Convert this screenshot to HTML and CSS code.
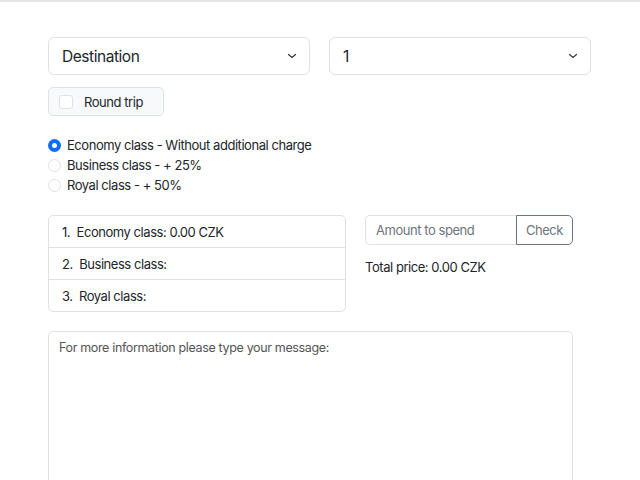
FILE: index.html
```html
<!DOCTYPE html>
<html>
<head>
<meta charset="utf-8">
<link rel="stylesheet" href="styles.css">
</head>
<body>
<div class="topline"></div>
<main class="page">
  <div class="selects">
    <div class="select"><span>Destination</span><svg width="10" height="6" viewBox="0 0 10 6"><path d="M1.5 1.5 L5 4.5 L8.5 1.5" fill="none" stroke="#343a40" stroke-width="1.2" stroke-linecap="round" stroke-linejoin="round"/></svg></div>
    <div class="select"><span>1</span><svg width="10" height="6" viewBox="0 0 10 6"><path d="M1.5 1.5 L5 4.5 L8.5 1.5" fill="none" stroke="#343a40" stroke-width="1.2" stroke-linecap="round" stroke-linejoin="round"/></svg></div>
  </div>
  <div class="roundtrip"><span class="check"></span><span>Round trip</span></div>
  <div class="radios">
    <div class="radio-row"><span class="radio on"></span>Economy class - Without additional charge</div>
    <div class="radio-row"><span class="radio"></span>Business class - + 25%</div>
    <div class="radio-row"><span class="radio"></span>Royal class - + 50%</div>
  </div>
  <div class="middle">
    <ol class="list">
      <li>1.&nbsp; Economy class: 0.00 CZK</li>
      <li>2.&nbsp; Business class:</li>
      <li>3.&nbsp; Royal class:</li>
    </ol>
    <div class="side">
      <div class="group"><div class="amount">Amount to spend</div><div class="btn">Check</div></div>
      <div class="total">Total price: 0.00 CZK</div>
    </div>
  </div>
  <div class="textarea">For more information please type your message:</div>
</main>
</body>
</html>
```
FILE: styles.css
```css
html, body { margin: 0; padding: 0; background: #fff; }
body { font-family: Inter, "Noto Sans", sans-serif; color: #212529; overflow: hidden; height: 480px; letter-spacing: -0.45px; }
.topline { height: 2px; background: #e6e6e6; }
.page { padding: 35px 0 0 48px; }
.selects { display: flex; gap: 19px; }
.select { width: 262px; height: 38px; box-sizing: border-box; border: 1px solid #dee2e6; border-radius: 6px; display: flex; align-items: center; justify-content: space-between; padding: 0 12px 0 13px; font-size: 15.5px; color: #212529; }
.roundtrip { margin-top: 12px; width: 116px; height: 29px; box-sizing: border-box; border: 1px solid #dee2e6; border-radius: 5px; background: #f8f9fa; display: flex; align-items: center; padding-left: 10px; font-size: 13px; }
.check { width: 12px; height: 12px; border: 1px solid #dee2e6; border-radius: 3px; background: #fff; margin-right: 11px; }
.radios { margin-top: 19px; font-size: 13px; }
.radio-row { height: 20px; display: flex; align-items: center; }
.radio { width: 11px; height: 11px; border: 1px solid #dee2e6; border-radius: 50%; margin-right: 6px; box-sizing: content-box; background: #fff; }
.radio.on { background: #fff; border: 4px solid #0d6efd; width: 5px; height: 5px; }
.middle { display: flex; margin-top: 20px; align-items: flex-start; }
.list { list-style: none; margin: 0; padding: 0; width: 298px; border: 1px solid #dee2e6; border-radius: 5px; font-size: 13px; box-sizing: border-box; }
.list li { height: 32px; box-sizing: border-box; display: flex; align-items: center; padding-left: 13px; border-top: 1px solid #dee2e6; }
.list li:first-child { border-top: none; height: 31px; }
.side { margin-left: 19px; }
.group { display: flex; height: 30px; }
.amount { width: 151px; box-sizing: border-box; border: 1px solid #dee2e6; border-right: none; border-radius: 5px 0 0 5px; display: flex; align-items: center; padding-left: 10px; font-size: 13px; color: #6c757d; }
.btn { width: 57px; box-sizing: border-box; border: 1px solid #6c757d; border-radius: 0 5px 5px 0; display: flex; align-items: center; justify-content: center; font-size: 13px; color: #6c757d; }
.total { margin-top: 14px; font-size: 13px; }
.textarea { margin-top: 19px; width: 525px; height: 200px; box-sizing: border-box; border: 1px solid #dee2e6; border-radius: 5px; padding: 8px 10px; font-size: 12.5px; color: #555; letter-spacing: -0.35px; }
```
